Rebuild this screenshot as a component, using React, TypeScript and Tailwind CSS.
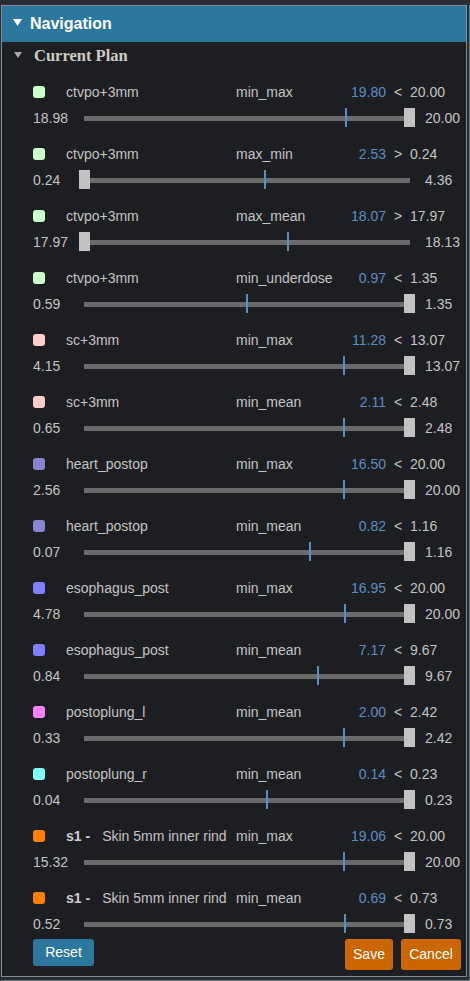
import React from "react";

type Item = {
  color: string;
  s1?: boolean;
  label: string;
  metric: string;
  value: string;
  comp: string;
  thr: string;
  min: string;
  max: string;
  thumb: "left" | "right";
  marker: number; // fraction 0..1
};

const items: Item[] = [
  { color: "#ccffcc", label: "ctvpo+3mm", metric: "min_max", value: "19.80", comp: "<", thr: "20.00", min: "18.98", max: "20.00", thumb: "right", marker: 0.804 },
  { color: "#ccffcc", label: "ctvpo+3mm", metric: "max_min", value: "2.53", comp: ">", thr: "0.24", min: "0.24", max: "4.36", thumb: "left", marker: 0.556 },
  { color: "#ccffcc", label: "ctvpo+3mm", metric: "max_mean", value: "18.07", comp: ">", thr: "17.97", min: "17.97", max: "18.13", thumb: "left", marker: 0.625 },
  { color: "#ccffcc", label: "ctvpo+3mm", metric: "min_underdose", value: "0.97", comp: "<", thr: "1.35", min: "0.59", max: "1.35", thumb: "right", marker: 0.5 },
  { color: "#ffcccc", label: "sc+3mm", metric: "min_max", value: "11.28", comp: "<", thr: "13.07", min: "4.15", max: "13.07", thumb: "right", marker: 0.799 },
  { color: "#ffcccc", label: "sc+3mm", metric: "min_mean", value: "2.11", comp: "<", thr: "2.48", min: "0.65", max: "2.48", thumb: "right", marker: 0.798 },
  { color: "#8a84d4", label: "heart_postop", metric: "min_max", value: "16.50", comp: "<", thr: "20.00", min: "2.56", max: "20.00", thumb: "right", marker: 0.799 },
  { color: "#8a84d4", label: "heart_postop", metric: "min_mean", value: "0.82", comp: "<", thr: "1.16", min: "0.07", max: "1.16", thumb: "right", marker: 0.693 },
  { color: "#8080ff", label: "esophagus_post", metric: "min_max", value: "16.95", comp: "<", thr: "20.00", min: "4.78", max: "20.00", thumb: "right", marker: 0.8 },
  { color: "#8080ff", label: "esophagus_post", metric: "min_mean", value: "7.17", comp: "<", thr: "9.67", min: "0.84", max: "9.67", thumb: "right", marker: 0.717 },
  { color: "#ff80ff", label: "postoplung_l", metric: "min_mean", value: "2.00", comp: "<", thr: "2.42", min: "0.33", max: "2.42", thumb: "right", marker: 0.799 },
  { color: "#80ffff", label: "postoplung_r", metric: "min_mean", value: "0.14", comp: "<", thr: "0.23", min: "0.04", max: "0.23", thumb: "right", marker: 0.561 },
  { color: "#ff8000", s1: true, label: "Skin 5mm inner rind", metric: "min_max", value: "19.06", comp: "<", thr: "20.00", min: "15.32", max: "20.00", thumb: "right", marker: 0.799 },
  { color: "#ff8000", s1: true, label: "Skin 5mm inner rind", metric: "min_mean", value: "0.69", comp: "<", thr: "0.73", min: "0.52", max: "0.73", thumb: "right", marker: 0.8 },
];

function Row({ it }: { it: Item }) {
  return (
    <div className="flex flex-col">
      <div className="flex items-center h-[20px] text-[14px] text-[#c4c4c4]">
        <div className="w-[12px] h-[12px] rounded-[3px] shrink-0" style={{ backgroundColor: it.color }} />
        <div className="w-[21px] shrink-0" />
        <div className="w-[170px] shrink-0 whitespace-nowrap overflow-visible">
          {it.s1 ? (
            <span>
              <span className="font-bold text-[#d0d0d0]">s1 -</span>
              <span className="ml-[12px]">{it.label}</span>
            </span>
          ) : (
            it.label
          )}
        </div>
        <div className="w-[100px] shrink-0 whitespace-nowrap">{it.metric}</div>
        <div className="w-[50px] shrink-0 text-right text-[#5b8ec4]">{it.value}</div>
        <div className="w-[24px] shrink-0 text-center">{it.comp}</div>
        <div className="whitespace-nowrap">{it.thr}</div>
      </div>
      <div className="flex items-center h-[20px] mt-[6px] text-[14px] text-[#c4c4c4]">
        <div className="w-[51px] shrink-0">{it.min}</div>
        <div className="relative w-[326px] h-[5px] bg-[#6b6b6b] shrink-0">
          <div
            className="absolute top-[-8px] w-[2px] h-[19px] bg-[#5b8ec4]"
            style={{ left: `${it.marker * 326 - 1}px` }}
          />
          <div
            className={
              "absolute top-[-8px] w-[11px] h-[19px] bg-[#c2c2c2] " +
              (it.thumb === "right" ? "right-[-5px]" : "left-[-5px]")
            }
          />
        </div>
        <div className="w-[15px] shrink-0" />
        <div className="whitespace-nowrap">{it.max}</div>
      </div>
    </div>
  );
}

export default function App() {
  return (
    <div
      className="w-[470px] h-[981px] bg-[#2a2e33] pt-[5px] pl-[1px] overflow-hidden"
      style={{ fontFamily: '"Liberation Sans", Arial, sans-serif' }}
    >
      <div className="w-[469px] h-[976px] border-r border-b border-[#68747a] pt-[0px]">
        <div className="w-[466px] h-[972px] border border-[#7f8c92] bg-[#1d1e21] flex flex-col">
          <div className="h-[36px] bg-[#2b779e] flex items-center shrink-0">
            <svg width="9" height="8" viewBox="0 0 9 8" className="ml-[11px] mt-[-2px]">
              <polygon points="0,0 9,0 4.5,7" fill="#ffffff" />
            </svg>
            <span className="ml-[8px] text-white font-bold text-[16px]">Navigation</span>
          </div>
          <div className="flex items-center h-[28px] mt-[0px]">
            <svg width="8" height="7" viewBox="0 0 8 7" className="ml-[12px] mt-[-2px]">
              <polygon points="0,0 8,0 4,6" fill="#a8a8a8" />
            </svg>
            <span
              className="ml-[12px] font-bold text-[16.5px] text-[#cdcdc6]"
              style={{ fontFamily: '"Liberation Serif", "Times New Roman", serif' }}
            >
              Current Plan
            </span>
          </div>
          <div className="pl-[31px] pt-[12px] flex flex-col gap-[16px]">
            {items.map((it, i) => (
              <Row key={i} it={it} />
            ))}
          </div>
          <div className="flex items-start mt-[5px] pl-[31px] pr-[5px]">
            <button className="w-[61px] h-[27px] rounded-[3px] bg-[#2b779e] text-white text-[14px]">
              Reset
            </button>
            <div className="flex-1" />
            <button className="w-[48px] h-[31px] rounded-[3px] bg-[#cc6600] text-white text-[14px]">
              Save
            </button>
            <button className="w-[60px] h-[31px] ml-[8px] rounded-[3px] bg-[#cc6600] text-white text-[14px]">
              Cancel
            </button>
          </div>
        </div>
      </div>
    </div>
  );
}
